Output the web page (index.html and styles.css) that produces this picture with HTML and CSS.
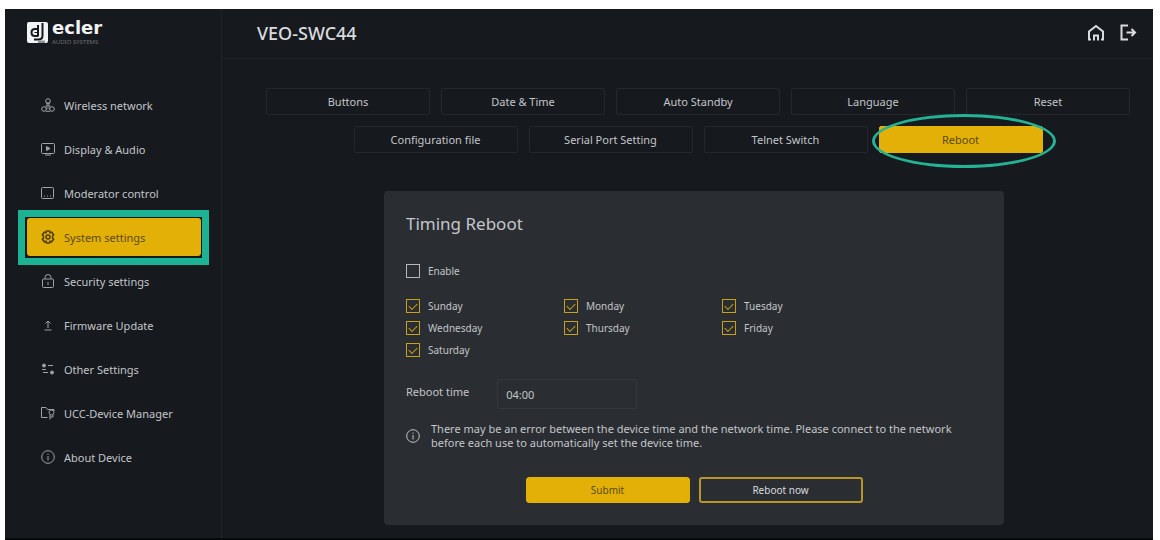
FILE: index.html
```html
<!DOCTYPE html>
<html lang="en">

<head>
  <meta charset="UTF-8" />
  <meta name="viewport" content="width=device-width, initial-scale=1.0" />
  <title>VEO-SWC44</title>
  <link rel="stylesheet" href="styles.css">
</head>

<body>
  <div class="app">
    <aside class="sidebar">
      <div class="logo">
        <svg class="logo-mark" viewBox="0 0 21 21" aria-hidden="true">
          <rect width="21" height="21" rx="2" fill="#f1f3f5" />
          <g fill="none" stroke="#16191d" stroke-width="2">
            <path d="M11 3v11.500M11 7H8Q4.500 7 4.500 10.500T8 14H11" />
            <path d="M15.500 1v12.500Q15.500 17.500 11.500 17.500H7" />
          </g>
          <path d="M7.500 10.500h3" stroke="#16191d" stroke-width="1" />
          <path d="M11 18.500h7v2.500h-7z" fill="#8d9196" />
        </svg>
        <div class="logo-text">
          <span class="logo-name">ecler</span>
          <span class="logo-sub">AUDIO SYSTEMS</span>
        </div>
      </div>

      <nav class="menu">
        <a href="#" class="menu-item">
          <svg class="icon" viewBox="0 0 14 14">
            <circle cx="7" cy="3" r="2.300" />
            <path d="M5 5.200h4M6 5.500v2.500M8 5.500v2.500" />
            <circle cx="3" cy="11" r="2.300" />
            <circle cx="11" cy="11" r="2.300" />
            <path d="M5 13.300h4M4.500 9L7 7.500 9.500 9M5.300 11L7 9.500l1.700 1.500" />
          </svg>
          Wireless network
        </a>
        <a href="#" class="menu-item">
          <svg class="icon" viewBox="0 0 14 14">
            <rect x=".5" y="1.500" width="13" height="10" rx="1" />
            <path d="M4 13h6" />
            <path d="M5.500 4.500v4l3.500-2z" fill="currentColor" />
          </svg>
          Display &amp; Audio
        </a>
        <a href="#" class="menu-item">
          <svg class="icon" viewBox="0 0 14 14">
            <rect x=".5" y="1.500" width="12" height="11" rx="1" />
            <path d="M3 10h1M6 10h1M9 10h1" />
          </svg>
          Moderator control
        </a>
        <a href="#" class="menu-item active">
          <svg class="icon" viewBox="0 0 14 14">
            <path d="M5.500 1h3l.5 1.800 1.700-.6 1.900 2.600-1 1.200v2l1 1.200-1.900 2.600-1.700-.6-.5 1.800h-3L5 11.200l-1.700.6-1.900-2.600 1-1.200V6l-1-1.200 1.900-2.600 1.700.6z" stroke-width="1.600" />
            <circle cx="7" cy="7" r="2" stroke-width="1.600" />
          </svg>
          System settings
        </a>
        <a href="#" class="menu-item">
          <svg class="icon" viewBox="0 0 14 14">
            <rect x="1.500" y="5" width="11" height="8.500" rx="1" />
            <path d="M4 5V3.500Q4 .5 7 .5t3 3V5M7 8v3" />
          </svg>
          Security settings
        </a>
        <a href="#" class="menu-item">
          <svg class="icon" viewBox="0 0 14 14">
            <path d="M7 10V3M4.500 5.500L7 3l2.500 2.500M3.500 12h7" />
          </svg>
          Firmware Update
        </a>
        <a href="#" class="menu-item">
          <svg class="icon" viewBox="0 0 14 14">
            <circle cx="3" cy="3.500" r="1.500" fill="currentColor" />
            <path d="M7 3.500h5M1 7.500h4M2 10.500h5" />
            <circle cx="11" cy="10.500" r="1.500" fill="currentColor" />
          </svg>
          Other Settings
        </a>
        <a href="#" class="menu-item">
          <svg class="icon" viewBox="0 0 14 14">
            <path d="M6.500 11.500h-6v-10h4.500l1.500 2h6.500v1.500" />
            <circle cx="10.500" cy="6.500" r="2.500" />
            <path d="M9 9v4.500M12 9v2H9" />
          </svg>
          UCC-Device Manager
        </a>
        <a href="#" class="menu-item">
          <svg class="icon" viewBox="0 0 14 14">
            <circle cx="7" cy="7" r="6.300" />
            <path d="M7 6v4.500M7 3.500v1.200" />
          </svg>
          About Device
        </a>
      </nav>
    </aside>

    <main class="main">
      <header class="topbar">
        <h1>VEO-SWC44</h1>
        <div class="topbar-actions">
          <button type="button" aria-label="Home">
            <svg viewBox="0 0 18 18">
              <path d="M4 15.500H2V7.500L9 2l7 5.500v8h-2" />
              <path d="M7 16.500v-5h4v5" />
            </svg>
          </button>
          <button type="button" aria-label="Log out">
            <svg viewBox="0 0 18 18">
              <path d="M9 1.500H2.500v14H9" />
              <path d="M7.500 8.500h8M12.500 5l3.500 3.500-3.500 3.500" />
            </svg>
          </button>
        </div>
      </header>

      <div class="content">
        <div class="tabs">
          <button type="button" class="tab">Buttons</button>
          <button type="button" class="tab">Date &amp; Time</button>
          <button type="button" class="tab">Auto Standby</button>
          <button type="button" class="tab">Language</button>
          <button type="button" class="tab">Reset</button>
          <button type="button" class="tab">Configuration file</button>
          <button type="button" class="tab">Serial Port Setting</button>
          <button type="button" class="tab">Telnet Switch</button>
          <button type="button" class="tab active">Reboot</button>
        </div>

        <form class="card">
          <h2>Timing Reboot</h2>

          <label class="check enable"><input type="checkbox" name="enable" /> Enable</label>

          <div class="days">
            <label class="check"><input type="checkbox" name="sun" checked /> Sunday</label>
            <label class="check"><input type="checkbox" name="mon" checked /> Monday</label>
            <label class="check"><input type="checkbox" name="tue" checked /> Tuesday</label>
            <label class="check"><input type="checkbox" name="wed" checked /> Wednesday</label>
            <label class="check"><input type="checkbox" name="thu" checked /> Thursday</label>
            <label class="check"><input type="checkbox" name="fri" checked /> Friday</label>
            <label class="check"><input type="checkbox" name="sat" checked /> Saturday</label>
          </div>

          <div class="time-row">
            <label for="reboot-time">Reboot time</label>
            <input id="reboot-time" name="reboot-time" type="text" value="04:00" />
          </div>

          <div class="note">
            <svg class="icon" viewBox="0 0 14 14">
              <circle cx="7" cy="7" r="6.300" />
              <path d="M7 6v4.500M7 3.500v1.200" />
            </svg>
            <p>There may be an error between the device time and the network time. Please connect to the network before each use to automatically set the device time.</p>
          </div>

          <div class="actions">
            <button type="submit" class="btn btn-primary">Submit</button>
            <button type="button" class="btn btn-outline">Reboot now</button>
          </div>
        </form>
      </div>
    </main>
  </div>
</body>

</html>
```
FILE: styles.css
```css
* {
  margin: 0;
  padding: 0;
  box-sizing: border-box;
}

body {
  min-height: 100vh;
  display: flex;
  padding: 9px 7px 0 5px;
  background: #ffffff;
  font-family: 'Noto Sans', 'Open Sans', sans-serif;
  font-size: 11px;
  color: #c3c6ca;
}

button,
input {
  font: inherit;
  color: inherit;
}

button {
  cursor: pointer;
}

.app {
  flex: 1;
  display: flex;
  background: #16191d;
  border-bottom: 2px solid #08090b;
}

/* sidebar */
.sidebar {
  width: 217px;
  flex-shrink: 0;
  padding: 0 20px 0 22px;
  border-right: 1px solid #202327;
}

.logo {
  display: flex;
  gap: 4px;
  height: 77px;
  padding-top: 13px;
}

.logo-mark {
  width: 21px;
  height: 21px;
}

.logo-text {
  display: flex;
  flex-direction: column;
  margin-top: -5px;
}

.logo-name {
  font-family: 'DejaVu Sans', sans-serif;
  font-size: 18px;
  font-weight: 700;
  line-height: 21px;
  color: #f1f3f5;
}

.logo-sub {
  font-size: 6px;
  line-height: 8px;
  color: #6c7076;
}

.menu {
  display: flex;
  flex-direction: column;
  gap: 6px;
}

.menu-item {
  display: flex;
  align-items: center;
  gap: 9px;
  height: 38px;
  padding: 0 14px;
  border-radius: 3px;
  color: inherit;
  text-decoration: none;
  white-space: nowrap;
}

.icon {
  width: 14px;
  height: 14px;
  flex-shrink: 0;
  fill: none;
  stroke: currentColor;
  stroke-width: 1;
}

.menu-item .icon {
  opacity: 0.8;
}

.menu-item.active {
  position: relative;
  background: #e2b007;
  color: #5a4a10;
}

.menu-item.active .icon {
  color: #2c260c;
}

.menu-item.active::after {
  content: '';
  position: absolute;
  inset: -8px -8px -9px -9px;
  border: 7px solid #1bb394;
}

/* main area */
.main {
  flex: 1;
  min-width: 0;
}

.topbar {
  display: flex;
  align-items: center;
  justify-content: space-between;
  height: 50px;
  padding: 0 16px 2px 35px;
  border-bottom: 1px solid #1f2226;
}

.topbar h1 {
  font-size: 18px;
  font-weight: 500;
  color: #d9dcdf;
}

.topbar-actions {
  display: flex;
  gap: 14px;
}

.topbar-actions button {
  width: 18px;
  height: 18px;
  border: none;
  background: none;
}

.topbar-actions svg {
  display: block;
  fill: none;
  stroke: #d9dcdf;
  stroke-width: 2;
}

.content {
  padding: 29px 22px 13px 43px;
}

.tabs {
  display: flex;
  flex-wrap: wrap;
  justify-content: center;
  gap: 11px;
}

.tab {
  width: 164px;
  height: 27px;
  background: none;
  border: 1px solid #24272c;
  border-radius: 2px;
}

.tab.active {
  position: relative;
  background: #e2b007;
  border-color: #e2b007;
  color: #5a4a10;
}

.tab.active::after {
  content: '';
  position: absolute;
  inset: -13px -14px -16px -8px;
  border: 3px solid #25b396;
  border-radius: 50%;
}

/* reboot card */
.card {
  margin: 38px 127px 0 119px;
  padding: 20px 22px 22px;
  background: #2a2d31;
  border-radius: 4px;
}

.card h2 {
  font-size: 17px;
  font-weight: 400;
  line-height: 26px;
}

.check {
  display: flex;
  align-items: center;
  gap: 8px;
  height: 22px;
  font-size: 10px;
}

.check input {
  appearance: none;
  display: grid;
  place-items: center;
  width: 14px;
  height: 14px;
  border: 1px solid #b5b8bb;
}

.check input:checked {
  border-color: #c9a01a;
}

.check input:checked::after {
  content: '';
  width: 7px;
  height: 4px;
  margin-bottom: 2px;
  border: solid #c9a01a;
  border-width: 0 0 1px 1px;
  transform: rotate(-45deg);
}

.enable {
  margin-top: 23px;
}

.days {
  display: grid;
  grid-template-columns: repeat(3, 158px);
  margin-top: 13px;
}

.time-row {
  display: flex;
  gap: 28px;
  margin-top: 18px;
  line-height: 26px;
}

.time-row input {
  width: 140px;
  height: 30px;
  padding: 0 8px;
  background: none;
  border: 1px solid #34373b;
  border-radius: 2px;
}

.note {
  display: flex;
  align-items: center;
  gap: 11px;
  margin-top: 13px;
  padding-right: 20px;
  line-height: 14px;
}

.actions {
  display: flex;
  justify-content: center;
  gap: 9px;
  margin-top: 27px;
}

.btn {
  width: 164px;
  height: 26px;
  border-radius: 3px;
  font-size: 10px;
}

.btn-primary {
  background: #e2b007;
  border: 1px solid #e2b007;
  color: #5a4a10;
}

.btn-outline {
  background: none;
  border: 2px solid #b8962a;
  color: #d9dcdf;
}
```
